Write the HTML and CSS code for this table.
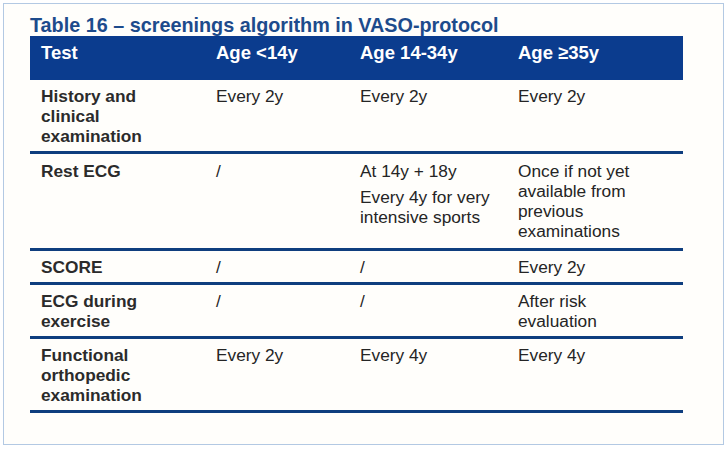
FILE: index.html
```html
<!DOCTYPE html>
<html>
<head>
<meta charset="utf-8">
<link rel="stylesheet" href="styles.css">
</head>
<body>
<div class="frame">
  <h1 class="title">Table 16 – screenings algorithm in VASO-protocol</h1>
  <table class="grid">
    <colgroup>
      <col class="c1"><col class="c2"><col class="c3"><col class="c4">
    </colgroup>
    <thead>
      <tr><th>Test</th><th>Age &lt;14y</th><th>Age 14-34y</th><th>Age ≥35y</th></tr>
    </thead>
    <tbody>
      <tr class="r1">
        <td class="lbl">History and clinical examination</td>
        <td>Every 2y</td><td>Every 2y</td><td class="last">Every 2y</td>
      </tr>
      <tr class="r2">
        <td class="lbl">Rest ECG</td>
        <td>/</td>
        <td><p class="para">At 14y + 18y</p><p class="para second">Every 4y for very intensive sports</p></td>
        <td class="last">Once if not yet available from previous examinations</td>
      </tr>
      <tr class="r3">
        <td class="lbl">SCORE</td>
        <td>/</td><td>/</td><td class="last">Every 2y</td>
      </tr>
      <tr class="r4">
        <td class="lbl">ECG during exercise</td>
        <td>/</td><td>/</td><td class="last">After risk evaluation</td>
      </tr>
      <tr class="r5">
        <td class="lbl">Functional orthopedic examination</td>
        <td>Every 2y</td><td>Every 4y</td><td class="last">Every 4y</td>
      </tr>
    </tbody>
  </table>
</div>
</body>
</html>
```
FILE: styles.css
```css
html, body {
  margin: 0;
  padding: 0;
  background: #ffffff;
}
.frame {
  box-sizing: border-box;
  margin: 3px 0 0 3px;
  width: 721px;
  height: 442px;
  border: 1px solid #b3c9e3;
  background: #fffefb;
  padding: 0 0 0 26px;
}
.title {
  margin: 0;
  padding-top: 10px;
  height: 22px;
  font-family: "Liberation Sans Narrow", "Liberation Sans", Arial, sans-serif;
  font-weight: bold;
  font-size: 19.8px;
  line-height: 22px;
  color: #1d4b8c;
  white-space: nowrap;
}
.grid {
  border-collapse: collapse;
  table-layout: fixed;
  width: 653px;
  font-family: "Liberation Sans", Arial, sans-serif;
  font-size: 17.3px;
  line-height: 20px;
  color: #252525;
}
.c1 { width: 175px; }
.c2 { width: 144px; }
.c3 { width: 158px; }
.c4 { width: 176px; }
.grid thead th {
  background: #0b3c8e;
  color: #ffffff;
  text-align: left;
  font-family: "Liberation Sans Narrow", "Liberation Sans", Arial, sans-serif;
  font-weight: bold;
  font-size: 18.5px;
  height: 44px;
  box-sizing: border-box;
  padding: 7px 6px 0 11px;
  vertical-align: top;
}
.grid tbody td {
  padding: 6px 6px 5px 11px;
  vertical-align: top;
  border-bottom: 3px solid #0f3e7e;
}
.grid tbody tr.r2 td { padding-top: 7px; padding-bottom: 7px; }
.grid tbody td.lbl {
  font-weight: bold;
  color: #2b2b2b;
  padding-right: 45px;
}
.grid tbody td.last {
  padding-right: 40px;
}
.para {
  margin: 0;
}
.para.second {
  margin-top: 6px;
}
```
